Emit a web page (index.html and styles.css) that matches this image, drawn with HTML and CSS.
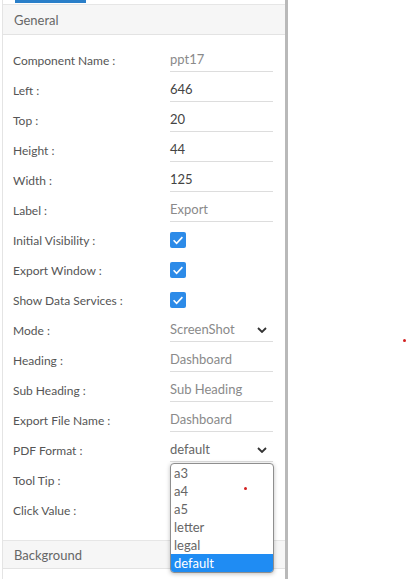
FILE: index.html
```html
<!DOCTYPE html>
<html lang="en">
<head>
  <meta charset="UTF-8">
  <title>Export properties</title>
  <link rel="stylesheet" href="styles.css">
</head>
<body>

<div class="panel">
  <div class="tab-mark"></div>
  <div class="section-head">General</div>

  <div class="rows">
    <div class="row"><span class="lbl">Component Name :</span><span class="field muted">ppt17</span></div>
    <div class="row"><span class="lbl">Left :</span><span class="field">646</span></div>
    <div class="row"><span class="lbl">Top :</span><span class="field">20</span></div>
    <div class="row"><span class="lbl">Height :</span><span class="field">44</span></div>
    <div class="row"><span class="lbl">Width :</span><span class="field">125</span></div>
    <div class="row"><span class="lbl">Label :</span><span class="field muted">Export</span></div>
    <div class="row"><span class="lbl">Initial Visibility :</span><span class="check"><svg viewBox="0 0 16 16"><path d="M3.6 8.3l3 3 5.8-6.2" /></svg></span></div>
    <div class="row"><span class="lbl">Export Window :</span><span class="check"><svg viewBox="0 0 16 16"><path d="M3.6 8.3l3 3 5.8-6.2" /></svg></span></div>
    <div class="row"><span class="lbl">Show Data Services :</span><span class="check"><svg viewBox="0 0 16 16"><path d="M3.6 8.3l3 3 5.8-6.2" /></svg></span></div>
    <div class="row"><span class="lbl">Mode :</span><span class="field select muted">ScreenShot<svg class="chev" viewBox="0 0 10 6"><path d="M1 1l4 4 4-4" /></svg></span></div>
    <div class="row"><span class="lbl">Heading :</span><span class="field muted">Dashboard</span></div>
    <div class="row"><span class="lbl">Sub Heading :</span><span class="field muted">Sub Heading</span></div>
    <div class="row"><span class="lbl">Export File Name :</span><span class="field muted">Dashboard</span></div>
    <div class="row"><span class="lbl">PDF Format :</span><span class="field select plain">default<svg class="chev" viewBox="0 0 10 6"><path d="M1 1l4 4 4-4" /></svg></span></div>
    <div class="row"><span class="lbl">Tool Tip :</span><span class="field"></span></div>
    <div class="row"><span class="lbl">Click Value :</span><span class="field"></span></div>
  </div>

  <div class="section-head sub">Background</div>

  <ul class="options">
    <li>a3</li>
    <li>a4</li>
    <li>a5</li>
    <li>letter</li>
    <li>legal</li>
    <li class="selected">default</li>
  </ul>
</div>

<span class="dot dot-a"></span>
<span class="dot dot-b"></span>

</body>
</html>
```

FILE: styles.css
```css
* { box-sizing: border-box; }
body {
  margin: 0;
  background: #fff;
  font-family: Lato, "Open Sans", sans-serif;
  height: 579px;
  overflow: hidden;
  position: relative;
}
.panel {
  position: relative;
  margin-left: 2px;
  width: 286px;
  height: 579px;
  padding-top: 4px;
  border-left: 1px solid #e4e4e4;
  border-right: 3px solid #b9b9b9;
}
.tab-mark {
  position: absolute;
  top: 0; left: 12px;
  width: 71px; height: 3px;
  background: #2a7fc9;
}
.section-head {
  height: 31px;
  padding-left: 11px;
  display: flex;
  align-items: center;
  font-size: 13px;
  color: #666;
  background: #f6f6f6;
  border-top: 1px solid #e6e6e6;
  border-bottom: 1px solid #e3e3e3;
}
.section-head.sub {
  height: 29px;
  margin-top: 15px;
}
.rows { padding-top: 10px; }
.row {
  height: 30px;
  display: flex;
  align-items: center;
  padding-left: 10px;
}
.lbl {
  width: 157px;
  font-size: 12px;
  color: #555;
}
.field {
  width: 103px;
  height: 22px;
  padding-top: 1px;
  font-size: 13px;
  color: #444;
  border-bottom: 1px solid #ddd;
  margin-top: 1px;
}
.field.muted { color: #8a8a8a; }
.field.plain { color: #666; }
.select {
  display: flex;
  justify-content: space-between;
  padding-right: 6px;
}
.chev {
  width: 10px; height: 6px;
  margin-top: 6px;
  fill: none;
  stroke: #333;
  stroke-width: 1.8;
}
.check {
  width: 16px; height: 16px;
  border-radius: 2px;
  background: #2d8be8;
  display: flex;
}
.check svg {
  width: 16px; height: 16px;
  fill: none;
  stroke: #fff;
  stroke-width: 1.6;
}
.options {
  position: absolute;
  left: 167px; top: 463px;
  width: 104px;
  margin: 0; padding: 0;
  list-style: none;
  background: #fff;
  border: 1px solid #8e8e8e;
  border-radius: 4px;
  box-shadow: 0 1px 4px rgba(0,0,0,0.25);
  overflow: hidden;
  font-size: 13px;
  color: #666;
}
.options li {
  height: 18px;
  line-height: 18px;
  padding-left: 3px;
}
.options li.selected {
  background: #1f8cf3;
  color: #fff;
}
.dot {
  position: absolute;
  width: 3px; height: 3px;
  border-radius: 50%;
  background: #d32020;
}
.dot-a { left: 403px; top: 339px; }
.dot-b { left: 244px; top: 487px; }
```
